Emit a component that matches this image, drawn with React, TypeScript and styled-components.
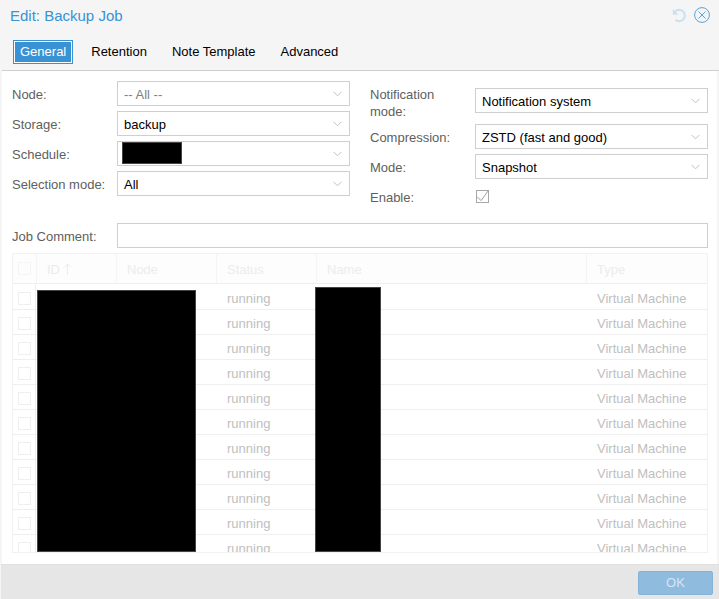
import React from 'react'
import styled, { createGlobalStyle } from 'styled-components'

const GlobalStyle = createGlobalStyle`
  html, body {
    margin: 0;
    padding: 0;
    background: #f5f5f5;
  }
  * {
    box-sizing: border-box;
  }
`

const Window = styled.div`
  width: 719px;
  height: 599px;
  display: flex;
  flex-direction: column;
  background: #f5f5f5;
  font-family: 'Liberation Sans', Arial, sans-serif;
  font-size: 13px;
  color: #000;
  overflow: hidden;
`

const Header = styled.div`
  height: 32px;
  flex: none;
  display: flex;
  align-items: center;
  justify-content: space-between;
  padding: 0 9px 2px 10px;
`

const Title = styled.div`
  font-size: 15px;
  color: #3892d4;
`

const Tools = styled.div`
  display: flex;
  align-items: center;
  gap: 7px;
`

const TabBar = styled.div`
  height: 39px;
  flex: none;
  display: flex;
  align-items: flex-start;
  gap: 11px;
  margin-left: 2px;
  padding: 8px 0 0 11px;
  border-bottom: 1px solid #cfcfcf;
`

const Tab = styled.div<{ $active?: boolean }>`
  height: 24px;
  line-height: 22px;
  padding: 0 6px;
  color: ${(p) => (p.$active ? '#fff' : '#000')};
  background: ${(p) => (p.$active ? '#3892d4' : 'transparent')};
  border: 1px solid ${(p) => (p.$active ? '#3892d4' : 'transparent')};
  box-shadow: ${(p) => (p.$active ? 'inset 0 0 0 1px #fff' : 'none')};
`

const Body = styled.div`
  flex: 1;
  min-height: 0;
  margin: 0 2px;
  background: #fff;
  padding: 10px 9px 10px 10px;
  display: flex;
  flex-direction: column;
`

const Columns = styled.div`
  display: grid;
  grid-template-columns: 338px 338px;
  column-gap: 20px;
  width: 696px;
  height: 142px;
  flex: none;
`

const Column = styled.div<{ $top?: number }>`
  display: flex;
  flex-direction: column;
  gap: 5px;
  padding-top: ${(p) => p.$top ?? 0}px;
`

const FormRow = styled.div`
  display: flex;
  align-items: center;
  min-height: 25px;
`

const TallRow = styled.div`
  display: flex;
  align-items: flex-start;
  height: 33px;
`

const Label = styled.div`
  width: 105px;
  flex: none;
  color: #606060;
  line-height: 17px;
  padding-top: 1px;
`

const TallLabel = styled(Label)`
  padding-top: 0;
`

const FieldSlot = styled.div`
  flex: 1;
  padding-top: 2px;
`

const Field = styled.div<{ $disabled?: boolean }>`
  flex: 1;
  height: 25px;
  border: 1px solid #cfcfcf;
  display: flex;
  align-items: center;
  justify-content: space-between;
  padding: 0 7px 0 6px;
  color: ${(p) => (p.$disabled ? '#808080' : '#000')};
`

const FieldText = styled.span`
  padding-top: 1px;
`

const Redacted = styled.div`
  width: 60px;
  height: 22px;
  margin: 0 0 1px -2px;
  background: #000;
  border: 1px solid #444;
`

const CheckBox = styled.div`
  width: 13px;
  height: 13px;
  border: 1px solid #a8a8a8;
  margin-left: 1px;
  display: flex;
  align-items: center;
  justify-content: center;
`

const CommentRow = styled.div`
  display: flex;
  align-items: center;
  width: 696px;
  height: 25px;
  flex: none;
`

const CommentInput = styled.div`
  flex: 1;
  height: 25px;
  border: 1px solid #cfcfcf;
`

const Grid = styled.div`
  position: relative;
  width: 696px;
  height: 300px;
  flex: none;
  margin-top: 5px;
  border: 1px solid #f2f2f2;
  overflow: hidden;
`

const cols = '23px 80px 100px 100px 270px 1fr'

const HeaderRow = styled.div`
  display: grid;
  grid-template-columns: ${cols};
  height: 30px;
  border-bottom: 1px solid #efefef;
  background: #fdfdfd;
`

const HeaderCell = styled.div`
  padding: 1px 0 0 10px;
  color: #ececec;
  border-left: 1px solid #f5f5f5;
  display: flex;
  align-items: center;
  gap: 3px;
`

const CheckHeaderCell = styled.div`
  display: flex;
  align-items: center;
  justify-content: center;
`

const HeaderCheck = styled.div`
  width: 13px;
  height: 13px;
  border: 1px solid #f5f5f5;
`

const Cell = styled.div`
  padding-left: 11px;
  line-height: 27px;
  color: #c0c0c0;
  white-space: nowrap;
`

const Row = styled.div`
  display: grid;
  grid-template-columns: ${cols};
  height: 25px;
  border-bottom: 1px solid #efefef;
  ${HeaderRow} + & {
    height: 26px;
  }
  ${HeaderRow} + & ${Cell} {
    line-height: 29px;
  }
`

const CheckCell = styled.div`
  border-right: 1px solid #efefef;
  display: flex;
  align-items: center;
  justify-content: center;
`

const RowCheck = styled.div`
  width: 13px;
  height: 13px;
  border: 1px solid #efefef;
`

const Cover = styled.div<{ $left: number; $top: number; $width: number }>`
  position: absolute;
  left: ${(p) => p.$left}px;
  top: ${(p) => p.$top}px;
  bottom: 0;
  width: ${(p) => p.$width}px;
  background: #000;
  border: 1px solid #444;
`

const Footer = styled.div`
  height: 35px;
  flex: none;
  margin-left: 1px;
  background: #e6e6e6;
  border-top: 1px solid #e0e0e0;
  display: flex;
  justify-content: flex-end;
  align-items: flex-start;
  padding: 6px 6px 0 0;
`

const OkButton = styled.div`
  width: 75px;
  height: 24px;
  line-height: 22px;
  text-align: center;
  background: #8fbbdf;
  border: 1px solid #85b4da;
  border-radius: 2px;
  color: #d6e6f3;
`

const Chevron = () => (
  <svg width="9" height="6" viewBox="0 0 9 6" fill="none">
    <path d="M.5.8l4 4 4-4" stroke="#c0c0c0" strokeWidth="1" />
  </svg>
)

const Select = ({ value, disabled }: { value?: string; disabled?: boolean }) => (
  <Field $disabled={disabled}>
    {value === undefined ? <Redacted /> : <FieldText>{value}</FieldText>}
    <Chevron />
  </Field>
)

const rows = Array.from({ length: 11 }, (_, i) => i)

export default function App() {
  return (
    <>
      <GlobalStyle />
      <Window>
        <Header>
          <Title>Edit: Backup Job</Title>
          <Tools>
            <svg width="15" height="15" viewBox="0 0 15 15" fill="none">
              <path d="M3.2 3.4A5.7 5.7 0 1 1 3.4 11.8" stroke="#c8e0f1" strokeWidth="2" />
              <path d="M.8 1v5.6h5.6z" fill="#c8e0f1" />
            </svg>
            <svg width="16" height="16" viewBox="0 0 16 16" fill="none">
              <circle cx="8" cy="8" r="7.4" stroke="#5ba3d9" strokeWidth="1" />
              <path d="M4.5 4.5l7 7M11.5 4.5l-7 7" stroke="#5ba3d9" strokeWidth="1" />
            </svg>
          </Tools>
        </Header>
        <TabBar>
          <Tab $active>General</Tab>
          <Tab>Retention</Tab>
          <Tab>Note Template</Tab>
          <Tab>Advanced</Tab>
        </TabBar>
        <Body>
          <Columns>
            <Column>
              <FormRow>
                <Label>Node:</Label>
                <Select value="-- All --" disabled />
              </FormRow>
              <FormRow>
                <Label>Storage:</Label>
                <Select value="backup" />
              </FormRow>
              <FormRow>
                <Label>Schedule:</Label>
                <Select />
              </FormRow>
              <FormRow>
                <Label>Selection mode:</Label>
                <Select value="All" />
              </FormRow>
            </Column>
            <Column $top={5}>
              <TallRow>
                <TallLabel>
                  Notification
                  <br />
                  mode:
                </TallLabel>
                <FieldSlot>
                  <Select value="Notification system" />
                </FieldSlot>
              </TallRow>
              <FormRow>
                <Label>Compression:</Label>
                <Select value="ZSTD (fast and good)" />
              </FormRow>
              <FormRow>
                <Label>Mode:</Label>
                <Select value="Snapshot" />
              </FormRow>
              <FormRow>
                <Label>Enable:</Label>
                <CheckBox>
                  <svg width="11" height="11" viewBox="0 0 11 11" fill="none" overflow="visible">
                    <path d="M0 5.6l4 4L11.4-.4" stroke="#a0a0a0" strokeWidth="1" />
                  </svg>
                </CheckBox>
              </FormRow>
            </Column>
          </Columns>
          <CommentRow>
            <Label>Job Comment:</Label>
            <CommentInput />
          </CommentRow>
          <Grid>
            <HeaderRow>
              <CheckHeaderCell>
                <HeaderCheck />
              </CheckHeaderCell>
              <HeaderCell>
                ID
                <svg width="9" height="12" viewBox="0 0 9 12" fill="none">
                  <path d="M4.5 12V1M1 4.5L4.5 1 8 4.5" stroke="#ececec" strokeWidth="1" />
                </svg>
              </HeaderCell>
              <HeaderCell>Node</HeaderCell>
              <HeaderCell>Status</HeaderCell>
              <HeaderCell>Name</HeaderCell>
              <HeaderCell>Type</HeaderCell>
            </HeaderRow>
            {rows.map((i) => (
              <Row key={i}>
                <CheckCell>
                  <RowCheck />
                </CheckCell>
                <Cell />
                <Cell />
                <Cell>running</Cell>
                <Cell />
                <Cell>Virtual Machine</Cell>
              </Row>
            ))}
            <Cover $left={24} $top={36} $width={159} />
            <Cover $left={302} $top={33} $width={66} />
          </Grid>
        </Body>
        <Footer>
          <OkButton>OK</OkButton>
        </Footer>
      </Window>
    </>
  )
}
